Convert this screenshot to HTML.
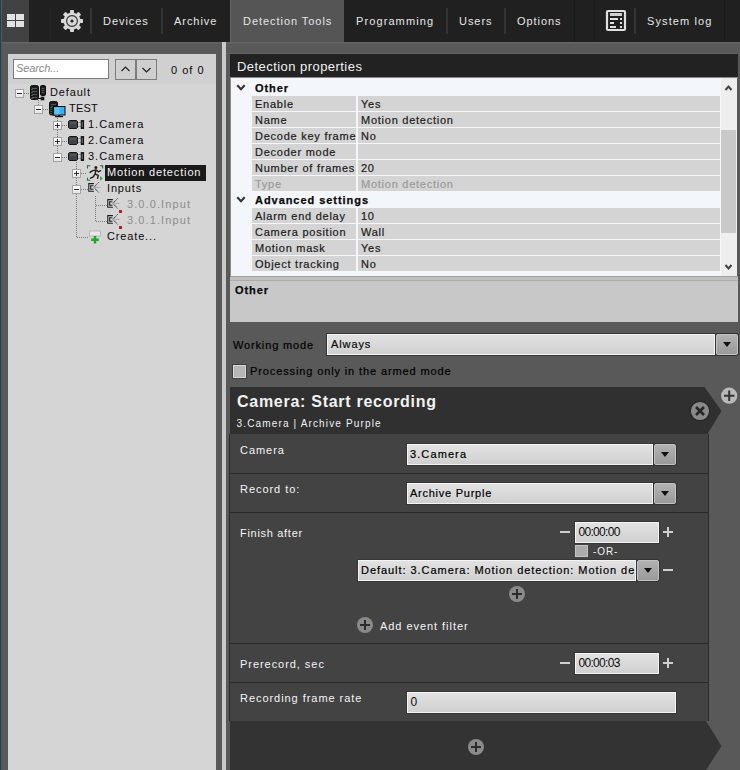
<!DOCTYPE html>
<html><head><meta charset="utf-8">
<style>
*{margin:0;padding:0;box-sizing:border-box}
html,body{width:740px;height:770px;overflow:hidden;background:#595959;font-family:"Liberation Sans",sans-serif}
.a{position:absolute}
.t{position:absolute;white-space:pre;line-height:1}
#hdr{left:0;top:0;width:740px;height:42px;background:#202020}
.ht{color:#e6e6e6;font-size:11px;letter-spacing:0.95px;top:16px}
.sep{position:absolute;width:2px;background:#353535;top:8px;height:26px}
.tr{font-size:11px;color:#0a0a0a;letter-spacing:0.85px}
.pl{font-size:12px;color:#1a1a1a;letter-spacing:0px;-webkit-text-stroke:0.2px currentColor}
.prow{position:absolute;left:252px;width:468px;height:15px;background:#d4d4d4}
.prow .c2{position:absolute;left:104px;top:0;width:2px;height:15px;background:#f3f6fa}
.dd{position:absolute;background:linear-gradient(#e2e2e2,#d0d0d0);border:1px solid #f4f4f4;box-shadow:0 0 0 1px #363636}
.ddb{position:absolute;background:linear-gradient(#b2b2b2,#9a9a9a);border:1px solid #c2c2c2;border-radius:2px;box-shadow:0 0 0 1px #333}
.tri{position:absolute;width:0;height:0;border-left:4px solid transparent;border-right:4px solid transparent;border-top:5px solid #111}
.wt{color:#eeeeee;font-size:12px;letter-spacing:0.4px}
.hl{position:absolute;left:230px;width:478px;height:1px;background:#2a2a2a}
</style></head><body>

<!-- left blue strip -->
<div class="a" style="left:0;top:0;width:1px;height:770px;background:#2a3c4c"></div>
<div class="a" style="left:1px;top:0;width:1px;height:770px;background:#4a5a68"></div>

<!-- header -->
<div id="hdr" class="a"></div>
<div class="a" style="left:0;top:0;width:1px;height:42px;background:#2a3c4c"></div>
<div class="a" style="left:1px;top:0;width:1px;height:42px;background:#4a5a68"></div>
<div class="a" style="left:2px;top:0;width:27px;height:42px;background:#424242"></div>
<div class="a" style="left:7px;top:14px;width:8px;height:6px;background:#e2e2e2"></div>
<div class="a" style="left:16px;top:14px;width:8px;height:6px;background:#e2e2e2"></div>
<div class="a" style="left:7px;top:21px;width:8px;height:6px;background:#e2e2e2"></div>
<div class="a" style="left:16px;top:21px;width:8px;height:6px;background:#e2e2e2"></div>

<svg class="a" style="left:60px;top:9px" width="24" height="24" viewBox="0 0 24 24">
  <g fill="#d8d8d8" transform="translate(12,12)">
    <circle r="8.6"/>
    <g id="tooth"><rect x="-2" y="-11" width="4" height="5" rx="0.8"/></g>
    <use href="#tooth" transform="rotate(45)"/>
    <use href="#tooth" transform="rotate(90)"/>
    <use href="#tooth" transform="rotate(135)"/>
    <use href="#tooth" transform="rotate(180)"/>
    <use href="#tooth" transform="rotate(225)"/>
    <use href="#tooth" transform="rotate(270)"/>
    <use href="#tooth" transform="rotate(315)"/>
  </g>
  <circle cx="12" cy="12" r="5.4" fill="none" stroke="#2a2a2a" stroke-width="1.1"/>
  <circle cx="12" cy="12" r="1.6" fill="#222"/>
</svg>

<div class="a" style="left:50px;top:8px;width:1px;height:30px;background:#262626"></div><div class="sep" style="left:90px"></div>
<div class="t ht" style="left:103px">Devices</div>
<div class="sep" style="left:161px"></div>
<div class="t ht" style="left:174px">Archive</div>
<div class="a" style="left:230px;top:0;width:114px;height:42px;background:#555555;border-left:1px solid #656565"></div>
<div class="t ht" style="left:243px">Detection Tools</div>
<div class="t ht" style="left:356px;letter-spacing:1.1px">Programming</div>
<div class="sep" style="left:446px"></div>
<div class="t ht" style="left:459px">Users</div>
<div class="sep" style="left:504px"></div>
<div class="t ht" style="left:517px">Options</div>
<div class="a" style="left:574px;top:0;width:1px;height:42px;background:#1a1a1a"></div>
<div class="a" style="left:594px;top:0;width:1px;height:42px;background:#1a1a1a"></div>
<svg class="a" style="left:605px;top:9px" width="23" height="24" viewBox="0 0 23 24">
  <rect x="2" y="2" width="18" height="19" fill="none" stroke="#e0e0e0" stroke-width="2.2" rx="1"/>
  <rect x="5" y="4" width="12" height="3" fill="#d0d0d0"/>
  <rect x="5" y="9" width="8" height="2" fill="#e0e0e0"/>
  <rect x="15" y="9" width="2" height="2" fill="#e0e0e0"/>
  <rect x="5" y="13" width="4" height="2" fill="#e0e0e0"/>
  <rect x="15" y="13" width="2" height="2" fill="#e0e0e0"/>
  <rect x="5" y="17" width="6" height="2" fill="#e0e0e0"/>
  <rect x="15" y="17" width="2" height="2" fill="#e0e0e0"/>
</svg>
<div class="sep" style="left:634px"></div>
<div class="t ht" style="left:647px;letter-spacing:1.1px">System log</div>
<div class="a" style="left:724px;top:0;width:1px;height:40px;background:#1a1a1a"></div>

<div class="a" style="left:2px;top:42px;width:738px;height:2px;background:linear-gradient(#676767,#5c5c5c)"></div>
<div class="a" style="left:226px;top:53px;width:514px;height:1px;background:#636363"></div>
<!-- left panel -->
<div class="a" style="left:8px;top:54px;width:208px;height:716px;background:#d5d5d5"></div><div class="a" style="left:8px;top:54px;width:208px;height:30px;background:#d0d0d0"></div>
<div class="a" style="left:222px;top:42px;width:4px;height:728px;background:#cacaca"></div>

<div class="a" style="left:13px;top:59px;width:96px;height:20px;background:#fff;border:1px solid #7c7c7c"></div>
<div class="t" style="left:16px;top:63px;font-size:11px;font-style:italic;color:#8a8a8a;letter-spacing:-0.1px">Search...</div>
<div class="a" style="left:115px;top:59px;width:21px;height:21px;background:#cfcfcf;border:1px solid #7c7c7c"></div>
<div class="a" style="left:136px;top:59px;width:21px;height:21px;background:#cfcfcf;border:1px solid #7c7c7c"></div>
<svg class="a" style="left:115px;top:59px" width="42" height="21">
  <polyline points="6.5,12 10.5,8 14.5,12" fill="none" stroke="#222" stroke-width="1.2"/>
  <polyline points="27.5,9 31.5,13 35.5,9" fill="none" stroke="#222" stroke-width="1.2"/>
</svg>
<div class="t tr" style="left:171px;top:65px;letter-spacing:1px">0 of 0</div>

<div id="tree"><div class="a" style="left:24px;top:93px;width:6px;height:1px;background:repeating-linear-gradient(90deg,#7a7a7a 0 1px,transparent 1px 2px)"></div>
<div class="a" style="left:38px;top:100px;width:1px;height:5px;background:repeating-linear-gradient(180deg,#7a7a7a 0 1px,transparent 1px 2px)"></div>
<div class="a" style="left:43px;top:109px;width:6px;height:1px;background:repeating-linear-gradient(90deg,#7a7a7a 0 1px,transparent 1px 2px)"></div>
<div class="a" style="left:57px;top:118px;width:1px;height:35px;background:repeating-linear-gradient(180deg,#7a7a7a 0 1px,transparent 1px 2px)"></div>
<div class="a" style="left:62px;top:125px;width:6px;height:1px;background:repeating-linear-gradient(90deg,#7a7a7a 0 1px,transparent 1px 2px)"></div>
<div class="a" style="left:62px;top:141px;width:6px;height:1px;background:repeating-linear-gradient(90deg,#7a7a7a 0 1px,transparent 1px 2px)"></div>
<div class="a" style="left:62px;top:157px;width:6px;height:1px;background:repeating-linear-gradient(90deg,#7a7a7a 0 1px,transparent 1px 2px)"></div>
<div class="a" style="left:76px;top:162px;width:1px;height:76px;background:repeating-linear-gradient(180deg,#7a7a7a 0 1px,transparent 1px 2px)"></div>
<div class="a" style="left:81px;top:173px;width:6px;height:1px;background:repeating-linear-gradient(90deg,#7a7a7a 0 1px,transparent 1px 2px)"></div>
<div class="a" style="left:81px;top:189px;width:7px;height:1px;background:repeating-linear-gradient(90deg,#7a7a7a 0 1px,transparent 1px 2px)"></div>
<div class="a" style="left:77px;top:237px;width:12px;height:1px;background:repeating-linear-gradient(90deg,#7a7a7a 0 1px,transparent 1px 2px)"></div>
<div class="a" style="left:95px;top:196px;width:1px;height:26px;background:repeating-linear-gradient(180deg,#7a7a7a 0 1px,transparent 1px 2px)"></div>
<div class="a" style="left:96px;top:205px;width:11px;height:1px;background:repeating-linear-gradient(90deg,#7a7a7a 0 1px,transparent 1px 2px)"></div>
<div class="a" style="left:96px;top:221px;width:11px;height:1px;background:repeating-linear-gradient(90deg,#7a7a7a 0 1px,transparent 1px 2px)"></div>
<div class="a" style="left:15px;top:89px;width:9px;height:9px;border:1px solid #a4a4a4;background:linear-gradient(#fdfdfd,#e6e6e6)"></div><div class="a" style="left:17px;top:93px;width:5px;height:1px;background:#2a2a3a"></div>
<div class="a" style="left:34px;top:105px;width:9px;height:9px;border:1px solid #a4a4a4;background:linear-gradient(#fdfdfd,#e6e6e6)"></div><div class="a" style="left:36px;top:109px;width:5px;height:1px;background:#2a2a3a"></div>
<div class="a" style="left:53px;top:121px;width:9px;height:9px;border:1px solid #a4a4a4;background:linear-gradient(#fdfdfd,#e6e6e6)"></div><div class="a" style="left:55px;top:125px;width:5px;height:1px;background:#2a2a3a"></div><div class="a" style="left:57px;top:123px;width:1px;height:5px;background:#2a2a3a"></div>
<div class="a" style="left:53px;top:137px;width:9px;height:9px;border:1px solid #a4a4a4;background:linear-gradient(#fdfdfd,#e6e6e6)"></div><div class="a" style="left:55px;top:141px;width:5px;height:1px;background:#2a2a3a"></div><div class="a" style="left:57px;top:139px;width:1px;height:5px;background:#2a2a3a"></div>
<div class="a" style="left:53px;top:153px;width:9px;height:9px;border:1px solid #a4a4a4;background:linear-gradient(#fdfdfd,#e6e6e6)"></div><div class="a" style="left:55px;top:157px;width:5px;height:1px;background:#2a2a3a"></div>
<div class="a" style="left:72px;top:169px;width:9px;height:9px;border:1px solid #a4a4a4;background:linear-gradient(#fdfdfd,#e6e6e6)"></div><div class="a" style="left:74px;top:173px;width:5px;height:1px;background:#2a2a3a"></div><div class="a" style="left:76px;top:171px;width:1px;height:5px;background:#2a2a3a"></div>
<div class="a" style="left:72px;top:185px;width:9px;height:9px;border:1px solid #a4a4a4;background:linear-gradient(#fdfdfd,#e6e6e6)"></div><div class="a" style="left:74px;top:189px;width:5px;height:1px;background:#2a2a3a"></div>
<svg class="a" style="left:30px;top:85px" width="17" height="16" viewBox="0 0 17 16">
<rect x="0.5" y="0.5" width="8" height="14" rx="1.8" fill="#1c1c1c" stroke="#111"/>
<g fill="#555"><rect x="2" y="3" width="5" height="1"/><rect x="2" y="6" width="5" height="1"/><rect x="2" y="9" width="5" height="1"/><rect x="2" y="12" width="5" height="1"/></g>
<g fill="#3fae4f"><rect x="1.5" y="4" width="1" height="1"/><rect x="1.5" y="7" width="1" height="1"/><rect x="1.5" y="10" width="1" height="1"/><rect x="1.5" y="13" width="1" height="1"/></g>
<rect x="10.5" y="0.5" width="5" height="10" rx="1.3" fill="#1c1c1c" stroke="#111"/>
<g fill="#555"><rect x="11.5" y="3" width="3" height="1"/><rect x="11.5" y="5" width="3" height="1"/><rect x="11.5" y="7" width="3" height="1"/></g>
<rect x="8" y="13" width="3" height="1" fill="#111"/>
<rect x="11" y="12" width="3" height="3" fill="#222" stroke="#111" stroke-width="0.6"/>
</svg>
<svg class="a" style="left:49px;top:101px" width="17" height="17" viewBox="0 0 17 17">
<rect x="0.5" y="0.5" width="8" height="13.5" rx="1.8" fill="#1c1c1c" stroke="#111"/>
<g fill="#555"><rect x="2" y="3" width="5" height="1"/><rect x="2" y="5" width="5" height="1"/></g>
<g fill="#3fae4f"><rect x="1.5" y="6" width="1" height="1"/><rect x="1.5" y="8" width="1" height="1"/><rect x="1.5" y="10" width="1" height="1"/><rect x="1.5" y="12" width="1" height="1"/></g>
<rect x="4.5" y="5.5" width="11.5" height="8.5" fill="#3ab0ee" stroke="#0a0a0a"/>
<rect x="5.5" y="6.5" width="5" height="7" fill="#5cc4f4"/>
<rect x="9" y="14" width="2" height="1.5" fill="#111"/>
<rect x="6" y="15" width="8" height="1.2" fill="#111"/>
</svg>
<svg class="a" style="left:68px;top:120px" width="17" height="10" viewBox="0 0 17 10">
<path d="M1.5,0.5 H8.5 L9.5,1.5 V7.5 L8.5,8.5 H1.5 L0.5,7.5 V1.5 Z" fill="#424548" stroke="#161616" stroke-width="1"/>
<rect x="2" y="2" width="6" height="2" fill="#50545a"/>
<rect x="10" y="2.2" width="3" height="4.4" fill="#d4d4d4"/>
<rect x="10" y="2.2" width="3" height="0.8" fill="#8a8a8a"/>
<rect x="10" y="5.8" width="3" height="0.8" fill="#8a8a8a"/>
<rect x="12.7" y="0" width="3.4" height="9" rx="0.5" fill="#1a1a1a"/>
<rect x="13.6" y="2" width="1.3" height="5" fill="#5a5a5a"/>
</svg>
<svg class="a" style="left:68px;top:136px" width="17" height="10" viewBox="0 0 17 10">
<path d="M1.5,0.5 H8.5 L9.5,1.5 V7.5 L8.5,8.5 H1.5 L0.5,7.5 V1.5 Z" fill="#424548" stroke="#161616" stroke-width="1"/>
<rect x="2" y="2" width="6" height="2" fill="#50545a"/>
<rect x="10" y="2.2" width="3" height="4.4" fill="#d4d4d4"/>
<rect x="10" y="2.2" width="3" height="0.8" fill="#8a8a8a"/>
<rect x="10" y="5.8" width="3" height="0.8" fill="#8a8a8a"/>
<rect x="12.7" y="0" width="3.4" height="9" rx="0.5" fill="#1a1a1a"/>
<rect x="13.6" y="2" width="1.3" height="5" fill="#5a5a5a"/>
</svg>
<svg class="a" style="left:68px;top:152px" width="17" height="10" viewBox="0 0 17 10">
<path d="M1.5,0.5 H8.5 L9.5,1.5 V7.5 L8.5,8.5 H1.5 L0.5,7.5 V1.5 Z" fill="#424548" stroke="#161616" stroke-width="1"/>
<rect x="2" y="2" width="6" height="2" fill="#50545a"/>
<rect x="10" y="2.2" width="3" height="4.4" fill="#d4d4d4"/>
<rect x="10" y="2.2" width="3" height="0.8" fill="#8a8a8a"/>
<rect x="10" y="5.8" width="3" height="0.8" fill="#8a8a8a"/>
<rect x="12.7" y="0" width="3.4" height="9" rx="0.5" fill="#1a1a1a"/>
<rect x="13.6" y="2" width="1.3" height="5" fill="#5a5a5a"/>
</svg>
<svg class="a" style="left:86px;top:165px" width="18" height="17" viewBox="0 0 18 17">
<g fill="none" stroke="#2f6a34" stroke-width="1.1">
<polyline points="1.5,3.6 1.5,0.8 4.3,0.8"/><polyline points="14,0.8 16.6,0.8 16.6,3.4"/><polyline points="1.5,12.8 1.5,15.3 4.3,15.3"/>
</g>
<polygon points="14,11 17,13.4 14,15.8" fill="#3cb046"/>
<circle cx="9.9" cy="2.5" r="1.5" fill="#1e1e1e"/>
<path d="M4,7.4 L6.8,5.6 L10,4.9 L12.4,6.8 L14.6,5.7 M10,4.9 L9,8.8 L7.3,11.9 L4.6,13.2 M9,8.8 L12.2,10.4 L11.6,13.3" fill="none" stroke="#1e1e1e" stroke-width="1.45" stroke-linecap="round" stroke-linejoin="round"/>
</svg>
<svg class="a" style="left:87px;top:182px" width="17" height="16" viewBox="0 0 17 16">
<path d="M6.9,1.6 H1.8 V9.3 H6.9" fill="none" stroke="#1e1e1e" stroke-width="1.1"/>
<path d="M6.4,3.7 H3.7 V7.2 H6.4" fill="none" stroke="#1e1e1e" stroke-width="1.1"/>
<path d="M11.6,0.4 L6.9,5.4 L11.6,10.4" fill="none" stroke="#262626" stroke-width="1" stroke-dasharray="1.2 0.6"/>
<path d="M6,5.4 H13.5" stroke="#a6a6b0" stroke-width="0.9"/></svg>
<svg class="a" style="left:106px;top:198px" width="17" height="16" viewBox="0 0 17 16">
<path d="M6.9,1.6 H1.8 V9.3 H6.9" fill="none" stroke="#1e1e1e" stroke-width="1.1"/>
<path d="M6.4,3.7 H3.7 V7.2 H6.4" fill="none" stroke="#1e1e1e" stroke-width="1.1"/>
<path d="M11.6,0.4 L6.9,5.4 L11.6,10.4" fill="none" stroke="#262626" stroke-width="1" stroke-dasharray="1.2 0.6"/>
<path d="M6,5.4 H13.5" stroke="#a6a6b0" stroke-width="0.9"/><rect x="13" y="12" width="3" height="3" fill="#b0201e"/></svg>
<svg class="a" style="left:106px;top:214px" width="17" height="16" viewBox="0 0 17 16">
<path d="M6.9,1.6 H1.8 V9.3 H6.9" fill="none" stroke="#1e1e1e" stroke-width="1.1"/>
<path d="M6.4,3.7 H3.7 V7.2 H6.4" fill="none" stroke="#1e1e1e" stroke-width="1.1"/>
<path d="M11.6,0.4 L6.9,5.4 L11.6,10.4" fill="none" stroke="#262626" stroke-width="1" stroke-dasharray="1.2 0.6"/>
<path d="M6,5.4 H13.5" stroke="#a6a6b0" stroke-width="0.9"/><rect x="13" y="12" width="3" height="3" fill="#b0201e"/></svg>
<svg class="a" style="left:89px;top:230px" width="13" height="15" viewBox="0 0 13 15">
<rect x="0.5" y="1" width="11" height="5" fill="#e8e8e8" stroke="#b8b8b8"/>
<path d="M6,6 V13.5 M2.2,9.8 H9.8" stroke="#1fa52a" stroke-width="2.4"/>
</svg>
<div class="a" style="left:105px;top:165px;width:101px;height:16px;background:#1a1a1a"></div>
<div class="t tr" style="left:50px;top:87px;color:#0a0a0a;">Default</div>
<div class="t tr" style="left:69px;top:103px;color:#0a0a0a;letter-spacing:0.2px">TEST</div>
<div class="t tr" style="left:88px;top:119px;color:#0a0a0a;letter-spacing:1px">1.Camera</div>
<div class="t tr" style="left:88px;top:135px;color:#0a0a0a;letter-spacing:1px">2.Camera</div>
<div class="t tr" style="left:88px;top:151px;color:#0a0a0a;letter-spacing:1px">3.Camera</div>
<div class="t tr" style="left:107px;top:167px;color:#f4f4f4;">Motion detection</div>
<div class="t tr" style="left:107px;top:183px;color:#0a0a0a;">Inputs</div>
<div class="t tr" style="left:127px;top:199px;color:#8c8c8c;letter-spacing:1.1px">3.0.0.Input</div>
<div class="t tr" style="left:127px;top:215px;color:#8c8c8c;letter-spacing:1.1px">3.0.1.Input</div>
<div class="t tr" style="left:107px;top:231px;color:#0a0a0a;">Create...</div></div><!--/tree-->

<!-- properties panel -->
<div class="a" style="left:230px;top:54px;width:508px;height:23px;background:#222222"></div>
<div class="t" style="left:237px;top:60px;font-size:13px;color:#f0f0f0;letter-spacing:0.45px">Detection properties</div>
<div class="a" style="left:230px;top:77px;width:508px;height:1px;background:#8a8a8a"></div>
<div class="a" style="left:230px;top:78px;width:507px;height:198px;background:#f3f6fa"></div>
<div id="props"><svg class="a" style="left:236px;top:84px" width="11" height="8"><polyline points="1.3,1.3 5,5.2 8.7,1.3" fill="none" stroke="#333" stroke-width="2.1"/></svg><div class="t" style="left:255px;top:83px;font-size:11px;font-weight:bold;color:#0a0a0a;letter-spacing:0.95px;-webkit-text-stroke:0.25px #0a0a0a">Other</div>
<div class="prow" style="top:96px"><div class="c2"></div></div><div class="a" style="left:252px;top:96px;width:104px;height:15px;overflow:hidden"><div class="t pl" style="left:3px;top:3px;font-size:11px;color:#1a1a1a;letter-spacing:0.75px">Enable</div></div><div class="t pl" style="left:361px;top:99px;font-size:11px;color:#1a1a1a;letter-spacing:0.75px">Yes</div>
<div class="prow" style="top:112px"><div class="c2"></div></div><div class="a" style="left:252px;top:112px;width:104px;height:15px;overflow:hidden"><div class="t pl" style="left:3px;top:3px;font-size:11px;color:#1a1a1a;letter-spacing:0.75px">Name</div></div><div class="t pl" style="left:361px;top:115px;font-size:11px;color:#1a1a1a;letter-spacing:0.75px">Motion detection</div>
<div class="prow" style="top:128px"><div class="c2"></div></div><div class="a" style="left:252px;top:128px;width:104px;height:15px;overflow:hidden"><div class="t pl" style="left:3px;top:3px;font-size:11px;color:#1a1a1a;letter-spacing:0.75px">Decode key frame</div></div><div class="t pl" style="left:361px;top:131px;font-size:11px;color:#1a1a1a;letter-spacing:0.75px">No</div>
<div class="prow" style="top:144px"><div class="c2"></div></div><div class="a" style="left:252px;top:144px;width:104px;height:15px;overflow:hidden"><div class="t pl" style="left:3px;top:3px;font-size:11px;color:#1a1a1a;letter-spacing:0.75px">Decoder mode</div></div>
<div class="prow" style="top:160px"><div class="c2"></div></div><div class="a" style="left:252px;top:160px;width:104px;height:15px;overflow:hidden"><div class="t pl" style="left:3px;top:3px;font-size:11px;color:#1a1a1a;letter-spacing:0.75px">Number of frames</div></div><div class="t pl" style="left:361px;top:163px;font-size:11px;color:#1a1a1a;letter-spacing:0.75px">20</div>
<div class="prow" style="top:176px"><div class="c2"></div></div><div class="a" style="left:252px;top:176px;width:104px;height:15px;overflow:hidden"><div class="t pl" style="left:3px;top:3px;font-size:11px;color:#9a9a9a;letter-spacing:0.75px">Type</div></div><div class="t pl" style="left:361px;top:179px;font-size:11px;color:#9a9a9a;letter-spacing:0.75px">Motion detection</div>
<svg class="a" style="left:236px;top:196px" width="11" height="8"><polyline points="1.3,1.3 5,5.2 8.7,1.3" fill="none" stroke="#333" stroke-width="2.1"/></svg><div class="t" style="left:255px;top:195px;font-size:11px;font-weight:bold;color:#0a0a0a;letter-spacing:0.95px;-webkit-text-stroke:0.25px #0a0a0a">Advanced settings</div>
<div class="prow" style="top:208px"><div class="c2"></div></div><div class="a" style="left:252px;top:208px;width:104px;height:15px;overflow:hidden"><div class="t pl" style="left:3px;top:3px;font-size:11px;color:#1a1a1a;letter-spacing:0.75px">Alarm end delay</div></div><div class="t pl" style="left:361px;top:211px;font-size:11px;color:#1a1a1a;letter-spacing:0.75px">10</div>
<div class="prow" style="top:224px"><div class="c2"></div></div><div class="a" style="left:252px;top:224px;width:104px;height:15px;overflow:hidden"><div class="t pl" style="left:3px;top:3px;font-size:11px;color:#1a1a1a;letter-spacing:0.75px">Camera position</div></div><div class="t pl" style="left:361px;top:227px;font-size:11px;color:#1a1a1a;letter-spacing:0.75px">Wall</div>
<div class="prow" style="top:240px"><div class="c2"></div></div><div class="a" style="left:252px;top:240px;width:104px;height:15px;overflow:hidden"><div class="t pl" style="left:3px;top:3px;font-size:11px;color:#1a1a1a;letter-spacing:0.75px">Motion mask</div></div><div class="t pl" style="left:361px;top:243px;font-size:11px;color:#1a1a1a;letter-spacing:0.75px">Yes</div>
<div class="prow" style="top:256px"><div class="c2"></div></div><div class="a" style="left:252px;top:256px;width:104px;height:15px;overflow:hidden"><div class="t pl" style="left:3px;top:3px;font-size:11px;color:#1a1a1a;letter-spacing:0.75px">Object tracking</div></div><div class="t pl" style="left:361px;top:259px;font-size:11px;color:#1a1a1a;letter-spacing:0.75px">No</div></div><!--/props-->
<div class="a" style="left:721px;top:78px;width:16px;height:198px;background:#eeeeee"></div>
<div class="a" style="left:721px;top:130px;width:15px;height:103px;background:#c9c9c9"></div>
<svg class="a" style="left:721px;top:78px" width="16" height="198">
  <polyline points="4.5,12 7.5,8.5 10.5,12" fill="none" stroke="#444" stroke-width="2"/>
  <polyline points="4.5,187 7.5,190.5 10.5,187" fill="none" stroke="#444" stroke-width="2"/>
</svg>
<div class="a" style="left:230px;top:276px;width:508px;height:1px;background:#a2a2a2"></div><div class="a" style="left:230px;top:78px;width:1px;height:244px;background:#8c8c8c"></div><div class="a" style="left:230px;top:277px;width:508px;height:3px;background:#c0c0c0"></div><div class="a" style="left:230px;top:280px;width:508px;height:1px;background:#acacac"></div>
<div class="a" style="left:230px;top:281px;width:508px;height:41px;background:#c8c8c8"></div>
<div class="t" style="left:235px;top:285px;font-size:11px;font-weight:bold;color:#0a0a0a;letter-spacing:0.95px;-webkit-text-stroke:0.25px #0a0a0a">Other</div>

<!-- working mode -->
<div class="t pl" style="left:233px;top:340px;font-size:11px;letter-spacing:0.85px;color:#000">Working mode</div>
<div class="dd" style="left:327px;top:334px;width:388px;height:21px"></div>
<div class="t pl" style="left:331px;top:339px;font-size:11px;letter-spacing:0.9px;color:#0a0a0a">Always</div>
<div class="ddb" style="left:716px;top:334px;width:22px;height:21px"></div>
<div class="tri" style="left:723px;top:342px"></div>
<div class="a" style="left:233px;top:365px;width:13px;height:13px;background:#b6b6b6;border:1px solid #d6d6d6;box-shadow:0 0 0 1px #404040"></div>
<div class="t pl" style="left:250px;top:366px;font-size:11px;letter-spacing:0.88px;color:#000">Processing only in the armed mode</div>

<!-- card -->
<svg class="a" style="left:229px;top:387px" width="511" height="383">
  <polygon points="1,0 475.5,0 492.5,24 478.5,47 1,47" fill="#303030"/>
  <polygon points="1,334 477,334 492.5,359 477,383 1,383" fill="#333333"/>
</svg>
<div class="a" style="left:230px;top:434px;width:478px;height:287px;background:#434343"></div>
<div class="a" style="left:229px;top:434px;width:1px;height:287px;background:#2a2a2a"></div><div class="a" style="left:708px;top:434px;width:1px;height:287px;background:#2a2a2a"></div>
<div class="t" style="left:237px;top:394px;font-size:16px;font-weight:bold;color:#f2f2f2;letter-spacing:0.72px">Camera: Start recording</div>
<div class="t" style="left:236.5px;top:419px;font-size:10px;color:#f0f0f0;letter-spacing:1.15px">3.Camera | Archive Purple</div>
<svg class="a" style="left:688px;top:384px" width="52" height="40">
  <circle cx="12" cy="27" r="10.6" fill="#292929"/><circle cx="12" cy="27" r="9.1" fill="#8a8a8a"/>
  <path d="M8,23 L16,31 M16,23 L8,31" stroke="#262626" stroke-width="2.6"/>
  <circle cx="41.2" cy="11.7" r="8.1" fill="#b9b9b9"/>
  <path d="M36,11.7 H46.4 M41.2,6.5 V16.9" stroke="#333" stroke-width="2"/>
</svg>

<div id="cardbody"><div class="hl" style="top:473px"></div>
<div class="hl" style="top:512px"></div>
<div class="hl" style="top:643px"></div>
<div class="hl" style="top:682px"></div>
<div class="t" style="left:240px;top:445px;font-size:11px;color:#f4f4f4;letter-spacing:0.95px">Camera</div>
<div class="dd" style="left:407px;top:444px;width:246px;height:21px;overflow:hidden"><div class="t" style="left:2px;top:4px;font-size:11px;color:#000;letter-spacing:1.1px;-webkit-text-stroke:0.2px #000">3.Camera</div></div><div class="ddb" style="left:654px;top:444px;width:22px;height:21px"></div><div class="tri" style="left:661.0px;top:452.0px"></div>
<div class="t" style="left:240px;top:484px;font-size:11px;color:#f4f4f4;letter-spacing:0.95px">Record to:</div>
<div class="dd" style="left:407px;top:483px;width:246px;height:21px;overflow:hidden"><div class="t" style="left:2px;top:4px;font-size:11px;color:#000;letter-spacing:0.75px;-webkit-text-stroke:0.2px #000">Archive Purple</div></div><div class="ddb" style="left:654px;top:483px;width:22px;height:21px"></div><div class="tri" style="left:661.0px;top:491.0px"></div>
<div class="t" style="left:240px;top:528px;font-size:11px;color:#f4f4f4;letter-spacing:0.7px">Finish after</div>
<div class="a" style="left:560px;top:531px;width:10px;height:2px;background:#cfcfcf"></div>
<div class="dd" style="left:575px;top:522px;width:84px;height:21px"><div class="t" style="left:2.5px;top:3px;font-size:12px;color:#0a0a0a;letter-spacing:-0.7px">00:00:00</div></div>
<div class="a" style="left:663px;top:531px;width:10px;height:2px;background:#cfcfcf"></div><div class="a" style="left:667px;top:527px;width:2px;height:10px;background:#cfcfcf"></div>
<div class="a" style="left:575px;top:545px;width:13px;height:12px;background:#ababab;border:1px solid #c4c4c4"></div>
<div class="t" style="left:593px;top:547px;font-size:10px;color:#f4f4f4;letter-spacing:0.9px">-OR-</div>
<div class="dd" style="left:358px;top:560px;width:278px;height:21px;overflow:hidden"><div class="t" style="left:2px;top:4px;font-size:11px;color:#000;letter-spacing:0.95px;-webkit-text-stroke:0.2px #000">Default: 3.Camera: Motion detection: Motion de</div></div><div class="ddb" style="left:637px;top:560px;width:22px;height:21px"></div><div class="tri" style="left:644.0px;top:568.0px"></div>
<div class="a" style="left:663px;top:569px;width:10px;height:2px;background:#cfcfcf"></div>
<svg class="a" style="left:507px;top:584px" width="20" height="20"><circle cx="10" cy="10" r="8" fill="#8a8a8a"/><path d="M5,10 H15 M10,5 V15" stroke="#2c2c2c" stroke-width="2"/></svg>
<svg class="a" style="left:355px;top:615px" width="20" height="20"><circle cx="10" cy="10" r="8" fill="#8a8a8a"/><path d="M5,10 H15 M10,5 V15" stroke="#2c2c2c" stroke-width="2"/></svg>
<div class="t" style="left:380px;top:621px;font-size:11px;color:#f4f4f4;letter-spacing:0.95px">Add event filter</div>
<div class="t" style="left:240px;top:659px;font-size:11px;color:#f4f4f4;letter-spacing:0.95px">Prerecord, sec</div>
<div class="a" style="left:560px;top:662px;width:10px;height:2px;background:#cfcfcf"></div>
<div class="dd" style="left:575px;top:653px;width:84px;height:21px"><div class="t" style="left:2.5px;top:3px;font-size:12px;color:#0a0a0a;letter-spacing:-0.7px">00:00:03</div></div>
<div class="a" style="left:663px;top:662px;width:10px;height:2px;background:#cfcfcf"></div><div class="a" style="left:667px;top:658px;width:2px;height:10px;background:#cfcfcf"></div>
<div class="t" style="left:240px;top:693px;font-size:11px;color:#f4f4f4;letter-spacing:0.95px">Recording frame rate</div>
<div class="dd" style="left:407px;top:692px;width:269px;height:21px"><div class="t" style="left:2.5px;top:3px;font-size:12px;color:#0a0a0a;letter-spacing:0px">0</div></div>
<svg class="a" style="left:466px;top:737px" width="20" height="20"><circle cx="10" cy="10" r="8" fill="#8a8a8a"/><path d="M5,10 H15 M10,5 V15" stroke="#2c2c2c" stroke-width="2"/></svg></div><!--/cardbody-->

</body></html>
